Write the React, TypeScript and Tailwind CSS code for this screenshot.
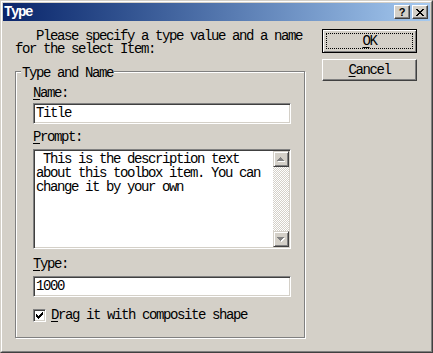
import React from 'react';

// Win2000 style 3D edges
const raised = 'border border-t-white border-l-white border-r-[#404040] border-b-[#404040] shadow-[inset_-1px_-1px_#808080]';
const sunken = 'border border-t-[#808080] border-l-[#808080] border-r-white border-b-white shadow-[inset_1px_1px_#404040,inset_-1px_-1px_#d4d0c8]';
const scrollBtn = 'border border-t-[#d4d0c8] border-l-[#d4d0c8] border-r-[#404040] border-b-[#404040] shadow-[inset_1px_1px_#ffffff,inset_-1px_-1px_#808080] bg-[#d4d0c8]';

const Arrow = ({ down }: { down?: boolean }) => {
    const rows = down ? [[0, 7], [1, 5], [2, 3], [3, 1]] : [[3, 1], [2, 3], [1, 5], [0, 7]];
    return (
        <svg width="8" height="5" viewBox="0 0 8 5" shapeRendering="crispEdges">
            {rows.map(([x, w], i) => (
                <rect key={'s' + i} x={x + 1} y={i + 1} width={w} height={1} fill="#ffffff" />
            ))}
            {rows.map(([x, w], i) => (
                <rect key={i} x={x} y={i} width={w} height={1} fill="#808080" />
            ))}
        </svg>
    );
};

const CloseGlyph = () => {
    const rows = [
        [[0, 2], [6, 2]],
        [[1, 2], [5, 2]],
        [[2, 4]],
        [[3, 2]],
        [[2, 4]],
        [[1, 2], [5, 2]],
        [[0, 2], [6, 2]],
    ];
    return (
        <svg width="8" height="7" viewBox="0 0 8 7" shapeRendering="crispEdges">
            {rows.map((r, y) => r.map(([x, w], j) => <rect key={y + '-' + j} x={x} y={y} width={w} height={1} fill="#000" />))}
        </svg>
    );
};

const CheckGlyph = () => {
    const rows = [
        [[6, 1]],
        [[5, 2]],
        [[0, 1], [4, 3]],
        [[0, 2], [3, 3]],
        [[0, 5]],
        [[1, 3]],
        [[2, 1]],
    ];
    return (
        <svg width="7" height="7" viewBox="0 0 7 7" shapeRendering="crispEdges">
            {rows.map((r, y) => r.map(([x, w], j) => <rect key={y + '-' + j} x={x} y={y} width={w} height={1} fill="#000" />))}
        </svg>
    );
};

const TitleBar = () => (
    <div className="h-[18px] flex items-center bg-linear-to-r from-[#0a246a] to-[#a6caf0] pl-px pr-[2px]">
        <span className="flex-1 text-white font-bold leading-[18px]">Type</span>
        <div className="flex gap-[2px]">
            <div className={`w-[16px] h-[14px] bg-[#d4d0c8] flex items-center justify-center ${raised}`}>
                <span className="font-['Liberation_Sans',sans-serif] font-bold text-[11px] leading-[11px] tracking-normal">?</span>
            </div>
            <div className={`w-[16px] h-[14px] bg-[#d4d0c8] flex items-center justify-center ${raised}`}>
                <CloseGlyph />
            </div>
        </div>
    </div>
);

const TextField = ({ value }: { value: string }) => (
    <div className={`w-[258px] h-[21px] bg-white pl-[2px] leading-[19px] whitespace-pre ${sunken}`}>{value}</div>
);

export default function App() {
    return (
        <div className="w-[433px] h-[353px] bg-[#d4d0c8] border border-t-[#d4d0c8] border-l-[#d4d0c8] border-r-[#404040] border-b-[#404040] font-['Liberation_Mono',monospace] text-[14px] tracking-[-1.4px] text-black">
            <div className="h-full border border-t-white border-l-white border-r-[#808080] border-b-[#808080] p-px flex flex-col">
                <TitleBar />

                <div className="flex items-start pl-[12px] pt-[8px]">
                    <div className="w-[290px]">
                        <div className="mt-px whitespace-pre leading-[13px]">
                            {'   Please specify a type value and a name\nfor the select Item:'}
                        </div>

                        {/* Type and Name group */}
                        <div className="relative mt-[15px] h-[267px] border border-[#808080] shadow-[1px_1px_0_#ffffff,inset_1px_1px_0_#ffffff] pl-[17px] pt-[15px]">
                            <span className="absolute left-[5px] top-[-5px] bg-[#d4d0c8] px-px leading-[13px]">Type and Name</span>

                            <div className="leading-[13px]"><u className="underline-offset-[2px]">N</u>ame:</div>
                            <div className="mt-[3px]"><TextField value="Title" /></div>

                            <div className="mt-[7px] leading-[13px]"><u className="underline-offset-[2px]">P</u>rompt:</div>
                            <div className={`mt-[5px] w-[258px] h-[100px] bg-white p-px flex ${sunken}`}>
                                <div className="flex-1 pl-px pt-px leading-[14px] whitespace-pre">
                                    {' This is the description text\nabout this toolbox item. You can\nchange it by your own'}
                                </div>
                                <div className="w-[16px] flex flex-col">
                                    <div className={`h-[16px] flex items-center justify-center ${scrollBtn}`}><Arrow /></div>
                                    <div className="flex-1 bg-[repeating-conic-gradient(#d4d0c8_0_25%,#ffffff_0_50%)] bg-[length:2px_2px]" />
                                    <div className={`h-[16px] flex items-center justify-center ${scrollBtn}`}><Arrow down /></div>
                                </div>
                            </div>

                            <div className="mt-[9px] leading-[13px]"><u className="underline-offset-[2px]">T</u>ype:</div>
                            <div className="mt-[5px]"><TextField value="1000" /></div>

                            <label className="mt-[12px] flex items-center gap-[5px] leading-[13px]">
                                <span className={`w-[13px] h-[13px] bg-white flex items-center justify-center ${sunken}`}>
                                    <CheckGlyph />
                                </span>
                                <span><u className="underline-offset-[2px]">D</u>rag it with composite shape</span>
                            </label>
                        </div>
                    </div>

                    <div className="ml-[17px] flex flex-col gap-[6px]">
                        <button className="w-[95px] h-[24px] border border-black shadow-[inset_1px_1px_#ffffff,inset_-1px_-1px_#808080] p-[3px]">
                            <div className="h-full border border-dotted border-black flex items-center justify-center leading-[13px]">
                                <span><u className="underline-offset-[2px]">O</u>K</span>
                            </div>
                        </button>
                        <button className={`w-[95px] h-[22px] flex items-center justify-center leading-[13px] ${raised}`}>
                            <span><u className="underline-offset-[2px]">C</u>ancel</span>
                        </button>
                    </div>
                </div>
            </div>
        </div>
    );
}
